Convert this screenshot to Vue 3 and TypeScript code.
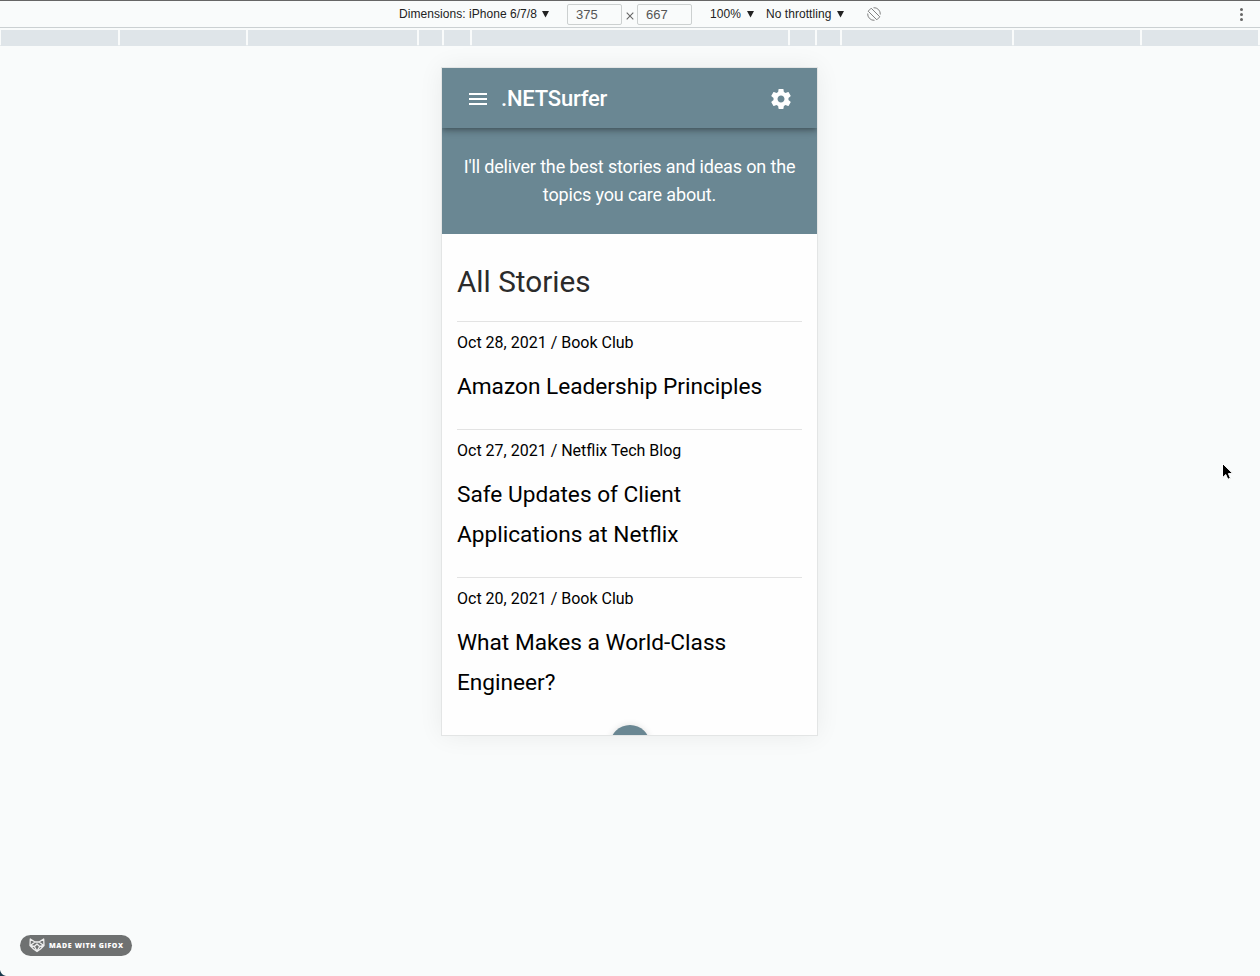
<script setup lang="ts">
interface Story {
  date: string
  source: string
  title: string
}

const stories: Story[] = [
  { date: 'Oct 28, 2021', source: 'Book Club', title: 'Amazon Leadership Principles' },
  { date: 'Oct 27, 2021', source: 'Netflix Tech Blog', title: 'Safe Updates of Client Applications at Netflix' },
  { date: 'Oct 20, 2021', source: 'Book Club', title: 'What Makes a World-Class Engineer?' },
]

// Widths of the breakpoint bars, left to right
const bars: number[] = [117, 126, 169, 23, 26, 316, 25, 23, 170, 126, 116]
</script>

<template>
  <div class="window">
    <header class="toolbar">
      <div class="device">Dimensions: iPhone 6/7/8
        <svg class="arrow" width="7" height="7" viewBox="0 0 7 7"><path d="M0 0h7L3.5 6.6z" /></svg>
      </div>
      <div class="size">375</div>
      <svg class="times" width="8" height="8" viewBox="0 0 8 8"><path d="M.7.7l6.6 6.6M7.3.7L.7 7.3" stroke="#666" stroke-width="1.1" /></svg>
      <div class="size">667</div>
      <div class="zoom">100%
        <svg class="arrow" width="7" height="7" viewBox="0 0 7 7"><path d="M0 0h7L3.5 6.6z" /></svg>
      </div>
      <div class="throttle">No throttling
        <svg class="arrow" width="7" height="7" viewBox="0 0 7 7"><path d="M0 0h7L3.5 6.6z" /></svg>
      </div>
      <svg class="rotate" width="14" height="14" viewBox="0 0 14 14" fill="none" stroke="#808080" stroke-width="1" stroke-linejoin="round">
        <path d="M4.200 1.200L12.800 9.800L9.800 12.800L1.200 4.200z" />
        <path d="M6.500 .7a6.300 6.300 0 0 1 6.800 6.800M7.500 13.300A6.300 6.300 0 0 1 .7 6.500" />
      </svg>
      <svg class="more" width="3" height="13" viewBox="0 0 3 13" fill="#666">
        <circle cx="1.5" cy="1.5" r="1.5" /><circle cx="1.5" cy="6.5" r="1.5" /><circle cx="1.5" cy="11.5" r="1.5" />
      </svg>
    </header>

    <div class="ruler">
      <div v-for="(w, i) in bars" :key="i" class="bar" :style="{ width: w + 'px' }"></div>
    </div>

    <main class="phone">
      <div class="appbar">
        <svg class="menu" width="18" height="12" viewBox="0 0 18 12" fill="#fff"><path d="M0 0h18v2H0zM0 5h18v2H0zM0 10h18v2H0z" /></svg>
        <span class="brand">.NETSurfer</span>
        <svg class="gear" width="24" height="24" viewBox="0 0 24 24" fill="#fff">
          <path d="M19.43 12.98c.04-.32.07-.64.07-.98s-.03-.66-.07-.98l2.11-1.65c.19-.15.24-.42.12-.64l-2-3.460c-.12-.22-.39-.3-.61-.22l-2.490 1c-.52-.4-1.080-.73-1.690-.98l-.38-2.650C14.460 2.180 14.250 2 14 2h-4c-.25 0-.46.18-.49.42l-.38 2.650c-.61.25-1.170.59-1.690.98l-2.490-1c-.23-.09-.49 0-.61.22l-2 3.460c-.13.22-.07.49.12.64l2.110 1.650c-.04.32-.07.65-.07.98s.03.66.07.98l-2.110 1.650c-.19.15-.24.42-.12.64l2 3.460c.12.22.39.3.61.22l2.490-1c.52.4 1.080.73 1.690.98l.38 2.650c.03.24.24.42.49.42h4c.25 0 .46-.18.49-.42l.38-2.650c.61-.25 1.170-.59 1.690-.98l2.490 1c.23.09.49 0 .61-.22l2-3.460c.12-.22.07-.49-.12-.64l-2.110-1.650zM12 15.500c-1.930 0-3.500-1.570-3.500-3.500s1.570-3.500 3.500-3.500 3.500 1.570 3.500 3.500-1.570 3.500-3.500 3.500z" />
        </svg>
      </div>
      <section class="intro">I'll deliver the best stories and ideas on the<br />topics you care about.</section>
      <section class="list">
        <h1>All Stories</h1>
        <article v-for="s in stories" :key="s.title">
          <p class="meta">{{ s.date }} / {{ s.source }}</p>
          <h2>{{ s.title }}</h2>
        </article>
      </section>
      <div class="fab"></div>
    </main>

    <svg class="cursor" width="13" height="20" viewBox="0 0 13 20"><path d="M1.5 1.5v14.2l3.3-3.2 2 4.8 2.6-1.1-2-4.6h4.4z" fill="#000" stroke="#fff" stroke-width="1" /></svg>

    <div class="badge">
      <svg width="16" height="15" viewBox="0 0 16 15" fill="none" stroke="#eee" stroke-width="1.3" stroke-linejoin="round">
        <path d="M1.300 1l4.700 3h4l4.700-3 .3 6.500L11.500 11 8 13.500 4.500 11 1 7.500zM6 4L1.300 7.500l4 1L8 13l2.700-4.500 4-1L10 4M5.300 8.500L8 6l2.700 2.500" />
      </svg>
      <span>MADE WITH GIFOX</span>
    </div>
    <svg class="corner" width="6" height="6" viewBox="0 0 6 6"><path d="M0 0Q1 5 6 6H0z" fill="#17384b" /></svg>
  </div>
</template>

<style>
body {
  margin: 0;
  background: #f9fbfb;
}
</style>

<style scoped>
* {
  box-sizing: border-box;
}
.window {
  position: relative;
  height: 976px;
  overflow: hidden;
  background: #f9fbfb;
  font-family: Roboto, "Liberation Sans", sans-serif;
}
.toolbar {
  display: flex;
  align-items: center;
  height: 28px;
  padding: 0 17px 0 399px;
  border-top: 1px solid #666;
  border-bottom: 1px solid #cbd0d2;
  font: 12px/26px "Liberation Sans", Arial, sans-serif;
  letter-spacing: 0.05px;
  color: #222;
  white-space: nowrap;
}
.device,
.zoom,
.throttle {
  display: flex;
  align-items: center;
  justify-content: space-between;
}
.device {
  width: 150px;
  margin-right: 18px;
}
.arrow {
  fill: #222;
}
.size {
  width: 55px;
  height: 21px;
  padding-left: 8px;
  border: 1px solid #ccd0d0;
  border-radius: 2px;
  font-size: 13px;
  line-height: 19px;
  color: #555;
}
.times {
  margin: 3px 3px 0 4px;
}
.zoom {
  width: 44px;
  margin: 0 12px 0 18px;
}
.throttle {
  width: 78px;
}
.rotate {
  margin-left: 23px;
}
.more {
  margin-left: auto;
}
.ruler {
  display: flex;
  gap: 2px;
  height: 18px;
  padding: 2px 0 0 1px;
  box-shadow: inset 0 -1px #e6ebed;
}
.bar {
  flex: none;
  height: 16px;
  background: #dfe5e9;
}
.phone {
  position: relative;
  width: 375px;
  height: 667px;
  margin: 22px 0 0 442px;
  background: #fefefe;
  box-shadow: 0 0 0 1px #e3e5e5, 0 0 24px rgba(0, 0, 0, 0.07);
}
.appbar {
  position: relative;
  display: flex;
  align-items: center;
  height: 60px;
  padding: 2px 24px 0 27px;
  background: #6a8793;
  color: #fff;
  clip-path: inset(0 0 -20px 0);
  box-shadow: 0 2px 4px -1px rgba(0, 0, 0, 0.2), 0 4px 5px rgba(0, 0, 0, 0.14), 0 1px 10px rgba(0, 0, 0, 0.12);
}
.brand {
  margin: -2px 0 0 14px;
  font-size: 22px;
  font-weight: 500;
  letter-spacing: -0.2px;
}
.gear {
  margin-left: auto;
}
.intro {
  height: 106px;
  padding-top: 25px;
  background: #6a8793;
  color: #fff;
  font-size: 18px;
  font-weight: 400;
  line-height: 28px;
  letter-spacing: -0.15px;
  text-align: center;
  white-space: nowrap;
}
.list {
  padding: 0 15px;
}
h1 {
  height: 87px;
  margin: 0;
  padding-top: 28px;
  font-size: 29.7px;
  font-weight: 400;
  line-height: 40px;
  color: #2b2b2b;
}
article {
  padding-bottom: 22px;
  border-top: 1px solid #e3e3e3;
  color: #000;
}
.meta {
  margin: 0;
  padding: 9px 0 13px;
  font-size: 16px;
  line-height: 23px;
}
h2 {
  margin: 0;
  font-size: 22.65px;
  font-weight: 400;
  line-height: 40px;
}
.fab {
  position: absolute;
  left: 168px;
  top: 657px;
  width: 40px;
  height: 40px;
  border-radius: 50%;
  background: #6a8793;
  clip-path: inset(-10px -10px 30px);
  box-shadow: 0 0 7px rgba(0, 0, 0, 0.12);
}
.cursor {
  position: absolute;
  left: 1221px;
  top: 462px;
}
.badge {
  position: absolute;
  left: 20px;
  top: 935px;
  display: flex;
  align-items: center;
  width: 112px;
  height: 21px;
  padding-left: 9px;
  border-radius: 11px;
  background: #6f7171;
  color: #fff;
  font: 800 7px/21px "Open Sans", sans-serif;
  letter-spacing: 0.6px;
  white-space: nowrap;
}
.badge span {
  margin-left: 4px;
}
.corner {
  position: absolute;
  left: 0;
  bottom: 0;
}
</style>
